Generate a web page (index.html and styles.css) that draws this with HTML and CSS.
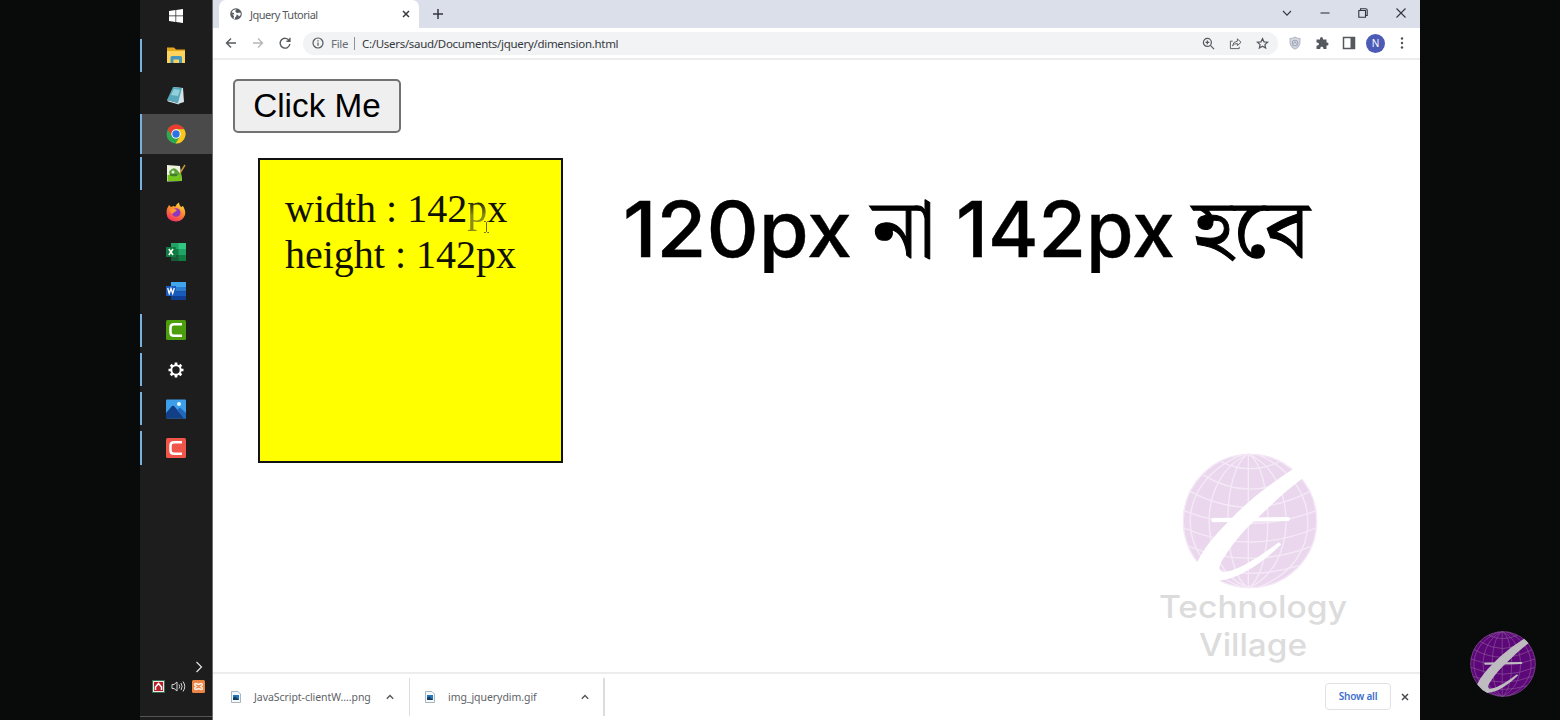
FILE: index.html
```html
<!DOCTYPE html>
<html lang="en">
<head>
<meta charset="utf-8">
<title>Jquery Tutorial</title>
<link rel="stylesheet" href="styles.css">
</head>
<body>
<svg class="defs" width="0" height="0">
  <symbol id="globe" viewBox="98 40 408 408">
    <circle class="globe-fill" cx="302" cy="244" r="201"/>
    <g class="globe-grid">
      <circle cx="302" cy="244" r="200"/>
      <path d="M297 43V445M297 43C215 90 215 395 297 445M297 43C140 110 140 380 297 445M280 45C65 130 75 370 280 443M297 43C375 90 375 395 297 445M297 43C448 110 448 380 297 445M325 45C522 125 530 370 325 443"/>
      <path d="M215 66Q300 108 390 66M160 105Q300 192 444 105M122 155Q300 250 482 155M103 213Q300 290 501 213M104 265Q300 349 500 265M118 320Q300 392 486 320M155 378Q300 424 449 378"/>
    </g>
    <path class="globe-swash" d="M432 88C350 140 290 190 243 240C190 292 165 325 142 370Q170 405 205 424C270 418 340 370 396 314L388 308C340 345 270 392 228 397C203 398 208 375 225 352C255 305 290 265 330 230C380 182 420 145 460 116Q448 100 432 88Z"/>
    <path class="globe-swash" d="M190 235L418 232Q426 238 418 244L190 248Q181 242 190 235Z"/>
  </symbol>
  <symbol id="img-file" viewBox="0 0 10 12">
    <path d="M.5.5H7L9.500 3V11.500H.5Z" fill="#f4f8fb" stroke="#97a3ad" stroke-width=".8"/>
    <path d="M2 4H8V9H2Z" fill="#2376b8"/><path d="M2 9V7L4 5.500 8 9Z" fill="#143c5c"/>
  </symbol>
  <symbol id="camtasia" viewBox="0 0 20 20">
    <rect width="20" height="20" rx="1.500"/>
    <path d="M16 4.200H8Q4.500 4.200 4.500 7.500V12.500Q4.500 15.800 8 15.800H16" fill="none" stroke="#fff" stroke-width="2.500"/>
  </symbol>
</svg>
<div class="stage">
  <aside class="side"></aside>

  <nav class="taskbar">
    <ul class="apps">
      <li class="app"><svg class="i14" viewBox="0 0 14 14" fill="#fff"><path d="M0 2L6.500 1V6.600H0ZM7.200.9L14 0V6.600H7.200ZM0 7.300H6.500V13L0 12ZM7.200 7.300H14V14L7.200 13Z"/></svg></li>
      <li class="app open"><svg class="i20" viewBox="0 0 20 20"><path d="M1 2.500H8L10 4.500H19V17.500H1Z" fill="#e5a51c"/><path d="M1 6H19V18H1Z" fill="#fcd35d"/><path d="M4.500 18V12.500Q4.500 11 6 11H14.500Q16 11 16 12.500V18H13V14.500H7.500V18Z" fill="#4597bd"/></svg></li>
      <li class="app"><svg class="i20" viewBox="0 0 20 20"><path d="M7 2L17 3 18 17 12 19Z" fill="#d4e3e6"/><path d="M7 2L16 3 12 18 1 15Z" fill="#58a9bc"/><path d="M8 4L14 5 12 11 5 10Z" fill="#92d0d9"/><path d="M1 15L12 18 13 19.500 2 16.500Z" fill="#cfe5e9"/></svg></li>
      <li class="app open active"><svg class="i20" viewBox="0 0 20 20"><circle cx="10" cy="10" r="9.500" fill="#2da94f"/><path d="M1.800 5.200A9.500 9.500 0 0 1 18.200 5.200H10L5.900 12.300Z" fill="#ea3d2f"/><path d="M18.200 5.200A9.500 9.500 0 0 1 9.600 19.500L14.100 12.300 10 5.200Z" fill="#fdc61a"/><circle cx="10" cy="10" r="4.700" fill="#fff"/><circle cx="10" cy="10" r="3.700" fill="#2b73e0"/></svg></li>
      <li class="app open"><svg class="i20" viewBox="0 0 20 20"><path d="M1 2L14 3 16 18 1 18.500Z" fill="#edf3df"/><path d="M1.500 12L15 10 16 18 1.500 18Z" fill="#76c51c"/><path d="M3 9Q8 2 12 8L14 11Q8 16 4 12Z" fill="#5da238"/><circle cx="7" cy="9" r="1.500" fill="#e7f2d7"/><path d="M4 12H11" stroke="#285b16"/><path d="M19 2L14 10" stroke="#c99534" stroke-width="1.500"/></svg></li>
      <li class="app"><svg class="i20" viewBox="0 0 20 20"><defs><linearGradient id="fox" x1=".8" y1="0" x2=".3" y2="1"><stop offset="0" stop-color="#ffe042"/><stop offset=".45" stop-color="#ff8a2c"/><stop offset="1" stop-color="#f52d67"/></linearGradient></defs><path d="M3 3L5 5Q7 4 8 4L9 5Q11 1 13 .5Q13 3 15 5L17 4Q20 9 19 13Q16 20 9.500 19.500Q1 19 .5 11Q.5 6 3 3Z" fill="url(#fox)"/><circle cx="10.200" cy="10.500" r="4.300" fill="#8f37c4"/><path d="M4 7Q8 6 11 8L9 10Q7 10 7 12Q4 11 4 7Z" fill="#ff9b2e"/></svg></li>
      <li class="app"><svg class="i20" viewBox="0 0 20 20"><path d="M5 1H20V19H5Z" fill="#21a366"/><path d="M12.500 1H20V7H12.500Z" fill="#33c481"/><path d="M5 7H12.500V13H5Z" fill="#107c41"/><path d="M5 13H20V19H5Z" fill="#185c37"/><path d="M12.500 13H20V19H12.500Z" fill="#107c41"/><rect y="5" width="10" height="10" fill="#107c41"/><path d="M2.800 7L7 13M7 7L2.800 13" stroke="#fff" stroke-width="1.500"/></svg></li>
      <li class="app"><svg class="i20" viewBox="0 0 20 20"><path d="M5 1H20V6H5Z" fill="#41a5ee"/><path d="M5 6H20V10.500H5Z" fill="#2b7cd3"/><path d="M5 10.500H20V15H5Z" fill="#185abd"/><path d="M5 15H20V19H5Z" fill="#103f91"/><rect y="5" width="10" height="10" fill="#185abd"/><path d="M1.700 7L3.200 12.500 5 7.500 6.700 12.500 8.300 7" fill="none" stroke="#fff" stroke-width="1.300"/></svg></li>
      <li class="app open"><svg class="i20 green"><use href="#camtasia"/></svg></li>
      <li class="app open"><svg class="i16" viewBox="-8 -8 16 16" fill="none" stroke="#fff"><circle r="4.700" stroke-width="2"/><g stroke-width="2.700"><path d="M0-7.500V-5M0 7.500V5M-7.500 0H-5M7.500 0H5"/><path d="M0-7.500V-5M0 7.500V5M-7.500 0H-5M7.500 0H5" transform="rotate(45)"/></g></svg></li>
      <li class="app open"><svg class="i20" viewBox="0 0 20 20"><rect y=".5" width="20" height="19" rx="1" fill="#3d9eea"/><path d="M0 14L6 7Q7 6.500 8 7L19 19.500H0Z" fill="#123f86"/><path d="M11 11L14 8.500 20 14V19.500H18Z" fill="#2168bd"/><circle cx="13" cy="5" r="2" fill="#e9f7ff"/></svg></li>
      <li class="app open"><svg class="i20 red"><use href="#camtasia"/></svg></li>
    </ul>
    <div class="tray">
      <svg class="tray-more" viewBox="0 0 8 12"><path d="M1.500 1L6.500 6 1.500 11" fill="none" stroke="#e4e4e4" stroke-width="1.200"/></svg>
      <div class="tray-icons">
        <svg width="13" height="13" viewBox="0 0 13 13"><rect width="13" height="13" fill="#2f6e50"/><rect x="1" y="1" width="11" height="11" fill="#f4e8e5"/><rect x="2" y="2" width="9" height="9" fill="#b82029"/><path d="M3.500 10V7L6.500 3.500 9.500 7V10" fill="none" stroke="#fff" stroke-width="1.500"/></svg>
        <svg width="15" height="13" viewBox="0 0 15 13" fill="none" stroke="#d4d4d4"><path d="M1 4.500H3L6 2V11L3 8.500H1ZM8 4.500Q9.500 6.500 8 8.500M10 3Q12.200 6.500 10 10M12 1.500Q15.500 6.500 12 11.500"/></svg>
        <svg width="13" height="13" viewBox="0 0 13 13"><rect width="13" height="13" rx="1.500" fill="#ec8544"/><path d="M4 3.500Q2 3.500 3 5.500L4.500 6.500 3 7.500Q2 9.500 4 9.500L6.500 8.500 9 9.500Q11 9.500 10 7.500L8.500 6.500 10 5.500Q11 3.500 9 3.500L6.500 4.500Z" fill="none" stroke="#fff2e8" stroke-width="1.400"/></svg>
      </div>
    </div>
  </nav>

  <main class="browser">
    <header class="tabstrip">
      <div class="tab">
        <svg class="favicon" viewBox="0 0 12 12"><circle cx="6" cy="6" r="5.800" fill="#565a5f"/><path d="M6.500 1Q4.500 3 6 4.500L7.500 5 10.500 4.500 10.700 7 9 8.500 8 7 6.500 6.500V8L5 9.500V11L3.500 10.400 4 8 1.200 5.600Q2 7 4.500 6.300L3.500 4.800 1.500 4.500 3 2.200Z" fill="#fff"/></svg>
        <span class="tab-title">Jquery Tutorial</span>
        <svg class="tab-close" viewBox="0 0 8 8"><path d="M1 1L7 7M7 1L1 7" stroke="#36393d" stroke-width="1.500"/></svg>
      </div>
      <svg class="new-tab" viewBox="0 0 12 12"><path d="M6 1V11M1 6H11" stroke="#35383d" stroke-width="1.500"/></svg>
      <div class="win-buttons">
        <svg viewBox="0 0 12 12"><path d="M2 4L6 8.200 10 4"/></svg>
        <svg viewBox="0 0 12 12"><path d="M1.500 6H10.500"/></svg>
        <svg viewBox="0 0 12 12"><path d="M1.800 3.500H8.500V10.200H1.800ZM3.500 3V1.800H8.700Q10.200 1.800 10.200 3.300V8.500H9"/></svg>
        <svg viewBox="0 0 12 12"><path d="M1.500 1.500L10.500 10.500M10.500 1.500L1.500 10.500"/></svg>
      </div>
    </header>

    <div class="toolbar">
      <svg class="nav-icon" viewBox="0 0 12 12"><path d="M11 6H1.500M6 1.500L1.500 6 6 10.500"/></svg>
      <svg class="nav-icon dim" viewBox="0 0 12 12"><path d="M1 6H10.500M6 1.500L10.500 6 6 10.500"/></svg>
      <svg class="nav-icon" viewBox="0 0 12 12"><path d="M10.200 3.600A4.900 4.900 0 1 0 10.900 7M10.900.8V4.300H7.400"/></svg>
      <div class="omnibox">
        <svg class="info" viewBox="0 0 12 12"><circle cx="6" cy="6" r="5"/><path d="M6 5.400V8.700M6 3.200V4.500"/></svg>
        <span class="scheme">File</span><span class="bar"></span>
        <span class="url">C:/Users/saud/Documents/jquery/dimension.html</span>
        <svg class="omni-icon" viewBox="0 0 14 14"><circle cx="5.800" cy="5.800" r="4.300"/><path d="M9 9L13 13M3.800 5.800H7.800M5.800 3.800V7.800"/></svg>
        <svg class="omni-icon" viewBox="0 0 14 14"><path d="M4 4.500H1.500V12.500H11V10.500M3.800 9.500Q4.300 5 9 4.500V2L13 5.700 9 9.200V7Q5.500 7 3.800 9.500Z" stroke-width="1"/></svg>
        <svg class="omni-icon" viewBox="0 0 14 14"><path d="M7 1.700L8.600 5.200 12.500 5.600 9.600 8.200 10.400 12 7 10 3.600 12 4.400 8.200 1.500 5.600 5.400 5.200Z"/></svg>
      </div>
      <div class="extensions">
        <svg viewBox="0 0 14 14"><path d="M7 .5Q9.500 2 12.500 2V7Q12 11.500 7 13.800Q2 11.500 1.500 7V2Q4.500 2 7 .5Z" fill="#b9bdc8"/><path d="M7 2Q9 3 11.300 3.200V7Q11 10.500 7 12.400Q3 10.500 2.700 7V3.200Q5 3 7 2Z" fill="#d7dae2"/><circle cx="7" cy="7" r="2.800" fill="none" stroke="#a1a9bb" stroke-width="1.100"/><path d="M5.500 8L7 5.500 8.500 8" fill="none" stroke="#a1a9bb"/></svg>
        <svg viewBox="0 0 14 14"><path d="M1.500 3.500H5Q4.600 1 6.500 1T8 3.500H11.500V6.500Q13.500 6 13.500 8T11.500 9.500V13H8.500Q8.500 10.500 6.800 10.500T5.200 13H1.500V9.700Q4 9.700 4 8T1.500 6.500Z" fill="#55595e"/></svg>
        <svg viewBox="0 0 14 14"><path d="M1.500 1.500H12.500V12.500H1.500Z" fill="#fff" stroke="#55595e" stroke-width="1.500"/><path d="M8.500 1.500H12.500V12.500H8.500Z" fill="#55595e"/></svg>
      </div>
      <span class="avatar">N</span>
      <svg class="kebab" viewBox="0 0 4 12" fill="#4c5056"><circle cx="2" cy="1.500" r="1.200"/><circle cx="2" cy="6" r="1.200"/><circle cx="2" cy="10.500" r="1.200"/></svg>
    </div>

    <section class="page">
      <div class="demo">
        <button class="click-me">Click Me</button>
        <div class="box">
          <div>width : 142<span class="faded">p</span>x</div>
          <div>height : 142px</div>
          <svg class="caret" viewBox="0 0 7 12"><path d="M1 .5H2.500L3.500 1.500 4.500.5H6M3.500 1.500V10.500M1 11.500H2.500L3.500 10.500 4.500 11.500H6" fill="none" stroke="#66681d"/></svg>
        </div>
      </div>
      <svg class="caption" width="720" height="240" viewBox="610 100 720 240">
        <text x="623" y="257" textLength="229" lengthAdjust="spacingAndGlyphs">120px</text>
        <text class="bn" x="872" y="257" textLength="63" lengthAdjust="spacingAndGlyphs">না</text>
        <text x="956" y="257" textLength="219" lengthAdjust="spacingAndGlyphs">142px</text>
        <text class="bn" x="1193" y="257" textLength="116" lengthAdjust="spacingAndGlyphs">হবে</text>
      </svg>
      <div class="watermark">
        <svg class="mark-light" width="136" height="136"><use href="#globe"/></svg>
        <svg class="brand" width="200" height="78" viewBox="1153 588 200 78">
          <text x="1159" y="617.500" textLength="188" lengthAdjust="spacingAndGlyphs">Technology</text>
          <text x="1199" y="656" textLength="108" lengthAdjust="spacingAndGlyphs">Village</text>
        </svg>
      </div>
    </section>

    <footer class="downloads">
      <div class="download">
        <svg class="file"><use href="#img-file"/></svg><span>JavaScript-clientW....png</span>
        <svg class="chev" viewBox="0 0 8 6"><path d="M.8 4.800L4 1.500 7.200 4.800"/></svg>
      </div>
      <div class="download last">
        <svg class="file"><use href="#img-file"/></svg><span>img_jquerydim.gif</span>
        <svg class="chev" viewBox="0 0 8 6"><path d="M.8 4.800L4 1.500 7.200 4.800"/></svg>
      </div>
      <button class="show-all">Show all</button>
      <svg class="tab-close" viewBox="0 0 8 8"><path d="M1 1L7 7M7 1L1 7" stroke="#46494d" stroke-width="1.500"/></svg>
    </footer>
  </main>

  <aside class="side right"><svg class="mark-dark" width="66" height="66"><use href="#globe"/></svg></aside>
</div>
</body>
</html>
```
FILE: styles.css
```css
* { box-sizing: border-box; }
body { margin: 0; background: #080b0a; overflow: hidden; font-family: "Noto Sans", "Open Sans", sans-serif; }
svg { display: block; flex: none; }
.defs { position: absolute; }
.stage { display: flex; width: 1560px; height: 720px; }
.side { width: 140px; background: #080b0a; flex: none; }
.side.right { display: flex; align-items: flex-end; justify-content: flex-end; padding: 0 24px 23px 0; }

.taskbar { width: 73px; flex: none; background: #1d1d1d; display: flex; flex-direction: column; justify-content: space-between; overflow: hidden; border-right: 1px solid #6d6d6d; }
.apps { list-style: none; margin: -3.500px 0 0; padding: 0; }
.app { height: 39.280px; display: flex; align-items: center; justify-content: center; border-left: 2px solid transparent; background-clip: padding-box; padding-right: 2px; }
.app.open { border-image: linear-gradient(transparent 3px, #76b1e0 3px, #76b1e0 36px, transparent 36px) 0 0 0 2; }
.app.active { background: #4b4a4b; border-image: none; border-left-color: #76b1e0; }
.i14 { width: 14px; height: 14px; }
.i16 { width: 16px; height: 16px; }
.i20 { width: 20px; height: 20px; }
.green { fill: #4c9e0c; }
.red { fill: #ef5548; }
.tray { border-bottom: 1px solid #555; height: 59px; margin-bottom: 3px; }
.tray-more { width: 8px; height: 12px; margin: 3px 0 0 55px; }
.tray-icons { display: flex; justify-content: space-between; align-items: center; margin: 7px 7px 0 12px; }

.browser { width: 1207px; flex: none; display: flex; flex-direction: column; background: #fff; }
.tabstrip { height: 28px; background: #dadfe9; display: flex; align-items: center; }
.tab { width: 200px; height: 28px; margin-left: 6px; background: #fff; border-radius: 7px 7px 0 0; display: flex; align-items: center; padding: 0 9px 0 11px; }
.favicon { width: 12px; height: 12px; }
.tab-title { margin-left: 8px; font-size: 10.500px; letter-spacing: -.5px; letter-spacing: -.48px; color: #55585d; flex: 1; }
.tab-close { width: 8px; height: 8px; }
.new-tab { width: 12px; height: 12px; margin-left: 13px; }
.tab-title { letter-spacing: -.5px; font-size: 11px; }
.win-buttons { margin-left: auto; display: flex; gap: 26px; padding: 0 13px 3px 0; }
.win-buttons svg { width: 12px; height: 12px; fill: none; stroke: #33363c; stroke-width: 1.100; }
.toolbar { height: 32px; border-bottom: 2px solid #ececee; display: flex; align-items: center; padding-left: 12px; flex: none; }
.nav-icon { width: 12px; height: 12px; margin-right: 15px; fill: none; stroke: #55595e; stroke-width: 1.400; }
.dim { stroke: #b5b7b9; }
.omnibox { width: 975px; height: 23px; border-radius: 12px; margin-left: -3px; background: #f1f3f4; display: flex; align-items: center; padding: 0 9px; flex: none; font-size: 11.500px; letter-spacing: -.3px; color: #36393e; }
.info { width: 12px; height: 12px; fill: none; stroke: #55595e; stroke-width: 1.200; }
.scheme { margin-left: 7px; width: 18px; color: #6b6e73; }
.bar { width: 1px; height: 13px; background: #8d9094; margin: 0 7px 0 5px; }
.url { flex: 1; white-space: nowrap; }
.omni-icon { width: 13px; height: 13px; margin-left: 14px; fill: none; stroke: #55595e; stroke-width: 1.300; }
.extensions { display: flex; gap: 13px; margin-left: 10px; }
.extensions svg { width: 14px; height: 14px; }
.avatar { width: 19px; height: 19px; margin-left: 10px; border-radius: 50%; background: #4c5bb5; color: #fff; font-size: 10px; display: grid; place-items: center; }
.kebab { width: 4px; height: 12px; margin-left: 15px; }

.page { flex: 1; min-height: 0; position: relative; display: flex; align-items: flex-start; padding: 19px 0 0 20px; }
.demo { width: 377px; flex: none; }
.click-me { display: block; width: 168px; height: 54px; padding: 0; border: 2px solid #727272; border-radius: 5px; background: #efefef; color: #000; font: 33.300px "Liberation Sans", Arial, sans-serif; }
.box { position: relative; width: 305px; height: 305px; margin: 25px 0 0 25px; padding: 26px 25px; border: 2px solid #111; background: #ff0; color: #111100; font: 40px/46px "Liberation Serif", "Times New Roman", serif; }
.faded { background: linear-gradient(#111100 30%, #8a8a16 65%); background-clip: text; color: transparent; }
.caret { position: absolute; left: 223px; top: 61px; width: 7px; height: 12px; }
.caption { margin-top: 21px; font: 500 77px "Inter", sans-serif; stroke: #000; stroke-width: .4; }
.bn { font: 400 82px "Noto Serif Bengali", "Noto Sans Bengali", "Lohit Bengali", "FreeSerif", serif; stroke-width: 1; }
.watermark { position: absolute; left: 940px; top: 393px; width: 200px; display: flex; flex-direction: column; align-items: center; }
.brand { margin-top: -1px; font: 500 31px "Inter", sans-serif; fill: #dcdcdc; }
.globe-fill { fill: var(--ball); }
.globe-grid { fill: none; stroke: var(--grid); stroke-width: 4; }
.globe-swash { fill: var(--swash); }
.mark-light { --ball: #ead7ee; --grid: #f5e9f7; --swash: #fff; margin-left: -6px; }
.mark-dark { --ball: #5d0878; --grid: #8b559a; --swash: #bebcc0; }

.downloads { height: 48px; flex: none; border-top: 2px solid #ececec; display: flex; align-items: center; padding-right: 11px; font-size: 10.500px; color: #606267; }
.download { width: 197px; height: 38px; border-right: 1px solid #dcdcdc; display: flex; align-items: center; padding: 0 15px 0 18px; }
.download.last { width: 195px; border-right-width: 2px; padding: 0 14px 0 15px; }
.download span { flex: 1; margin-left: 13px; letter-spacing: -.05px; white-space: nowrap; }
.file { width: 10px; height: 12px; }
.chev { width: 8px; height: 6px; fill: none; stroke: #4f5257; stroke-width: 1.300; }
.show-all { margin: 0 10px 2px auto; width: 66px; height: 27px; padding: 0; background: #fff; border: 1px solid #dfe1e5; border-radius: 4px; color: #3e70cf; font: 600 10px "Noto Sans", sans-serif; letter-spacing: -.2px; }
```
